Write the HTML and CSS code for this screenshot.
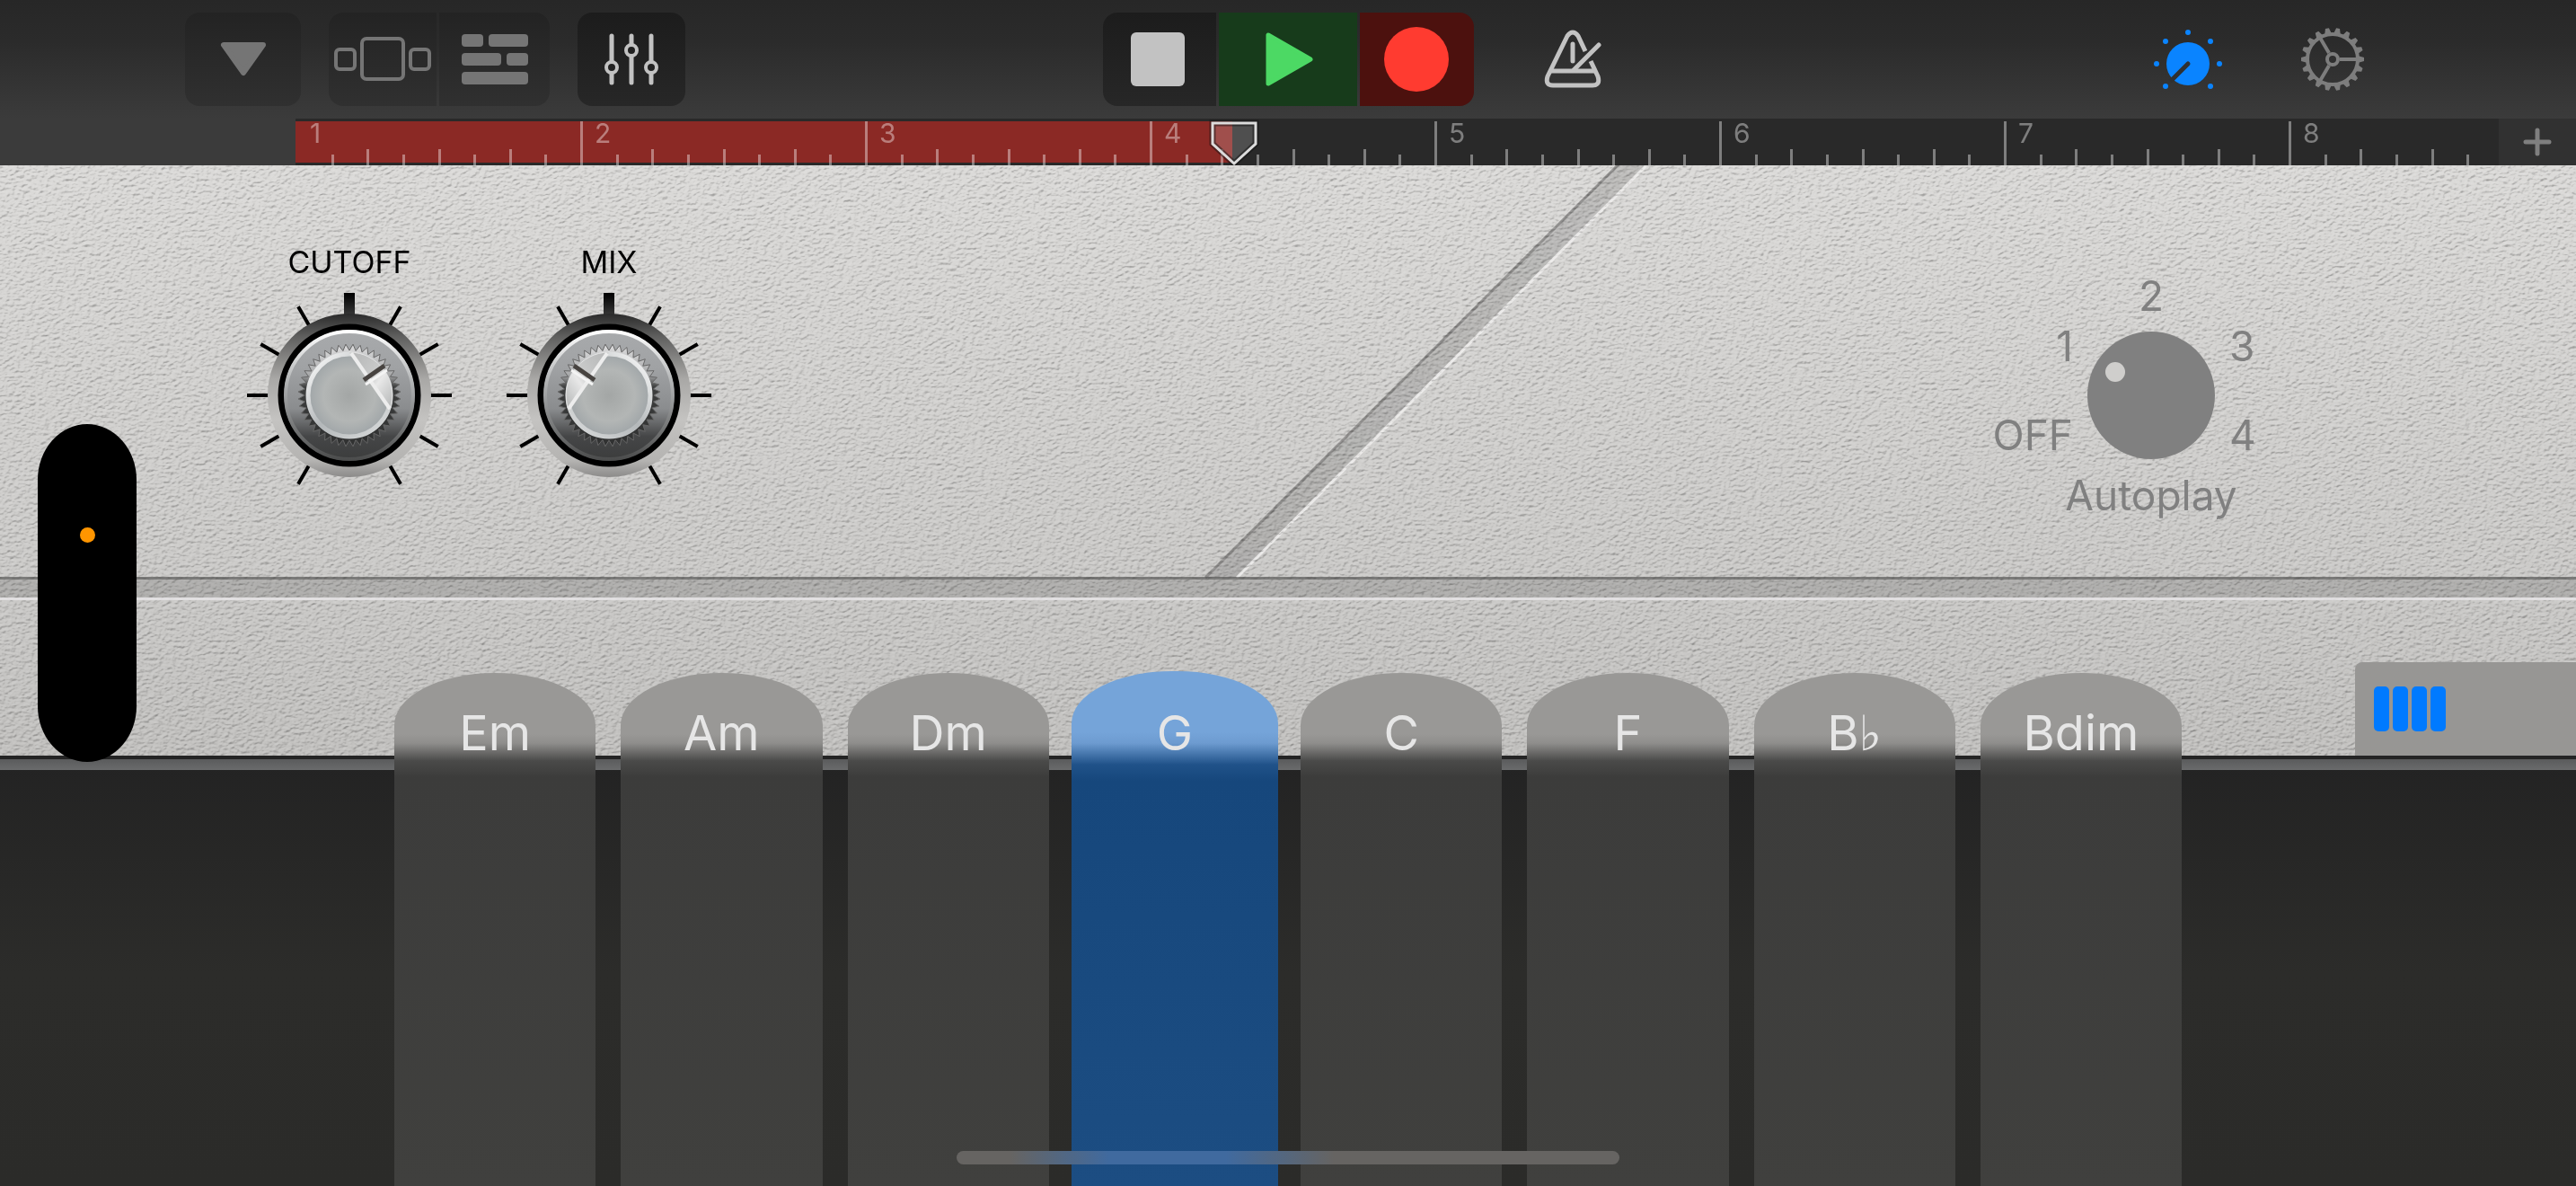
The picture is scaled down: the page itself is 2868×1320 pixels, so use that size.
FILE: index.html
```html
<!DOCTYPE html>
<html lang="en">
<head>
  <meta charset="utf-8">
  <title>Smart Keyboard</title>
  <link rel="stylesheet" href="styles.css">
</head>
<body>
  <header class="toolbar">
    <div class="tools">
      <button class="tool nav" aria-label="Menu">
        <svg width="54" height="40" viewBox="0 0 54 40"><path d="M5 4h44L27 35z" fill="#757575" stroke="#757575" stroke-width="6" stroke-linejoin="round"/></svg>
      </button>
      <div class="pair">
        <button class="tool" aria-label="Browser">
          <svg width="110" height="52" viewBox="0 0 110 52" fill="none" stroke="#757575" stroke-width="4">
            <rect x="3" y="15" width="21" height="22" rx="4"/>
            <rect x="32" y="3" width="46" height="45" rx="5"/>
            <rect x="86" y="15" width="21" height="22" rx="4"/>
          </svg>
        </button>
        <button class="tool" aria-label="Tracks">
          <svg width="74" height="56" viewBox="0 0 74 56" fill="#757575">
            <rect width="24" height="14" rx="4"/><rect x="30" width="44" height="14" rx="4"/>
            <rect y="21" width="44" height="14" rx="4"/><rect x="50" y="21" width="24" height="14" rx="4"/>
            <rect y="42" width="74" height="14" rx="4"/>
          </svg>
        </button>
      </div>
      <button class="tool mixer" aria-label="Track controls">
        <svg width="62" height="58" viewBox="0 0 62 58" fill="none" stroke="#c2c2c2" stroke-width="5" stroke-linecap="round">
          <path d="M9 3v28M9 45v10M31 3v9M31 26v29M53 3v28M53 45v10"/>
          <g stroke-width="4"><circle cx="9" cy="38" r="6"/><circle cx="31" cy="19" r="6"/><circle cx="53" cy="38" r="6"/></g>
        </svg>
      </button>
    </div>

    <div class="transport">
      <button class="stop" aria-label="Stop"><svg width="60" height="60"><rect width="60" height="60" rx="6" fill="#c2c2c2"/></svg></button>
      <button class="play" aria-label="Play"><svg width="54" height="62" viewBox="0 0 54 62"><path d="M3 4v54l47-27z" fill="#4cd964" stroke="#4cd964" stroke-width="5" stroke-linejoin="round"/></svg></button>
      <button class="record" aria-label="Record"><svg width="72" height="72"><circle cx="36" cy="36" r="36" fill="#ff3b30"/></svg></button>
    </div>

    <div class="extras">
      <button class="metronome" aria-label="Metronome">
        <svg width="72" height="72" viewBox="0 0 72 72" fill="none" stroke="#c2c2c2" stroke-width="5" stroke-linecap="round" stroke-linejoin="round">
          <path d="M50 27L42 10Q36 2 30 10L8 55Q5 65 14 65H58Q67 65 64 55L56 38" stroke-linecap="butt"/>
          <path d="M12 49H60" stroke-linecap="butt"/>
          <path d="M37 48L65 20M36 19V38"/>
        </svg>
      </button>
      <button class="controls" aria-label="Instrument controls">
        <svg width="78" height="78" viewBox="-39 -39 78 78" fill="#0a84ff">
          <circle r="24"/>
          <path d="M0 0L-18 18" stroke="#303030" stroke-width="5" stroke-linecap="round"/>
          <circle cy="-35" r="3"/><circle cx="25" cy="-25" r="3"/><circle cx="35" r="3"/><circle cx="25" cy="25" r="3"/>
          <circle cx="-25" cy="-25" r="3"/><circle cx="-35" r="3"/><circle cx="-25" cy="25" r="3"/>
        </svg>
      </button>
      <button class="settings" aria-label="Settings">
        <svg width="72" height="72" viewBox="-36 -36 72 72" fill="none" stroke="#7d7d7d" stroke-width="4">
          <circle r="28"/><circle r="6"/>
          <path d="M8 0H27M-4 -7L-14 -24M-4 7L-14 24"/>
          <g id="cog" fill="#7d7d7d" stroke="none"></g>
        </svg>
      </button>
    </div>
  </header>

  <div class="timeline">
    <div class="ruler" id="ruler"><div class="region"></div></div>
    <svg class="playhead" width="56" height="54" viewBox="0 0 56 54">
      <path d="M4 5H52V28L28 50L4 28Z" fill="#fff" fill-opacity=".18" stroke="#141414" stroke-opacity=".5" stroke-width="7"/>
      <path d="M4 5H52V28L28 50L4 28Z" fill="none" stroke="#dcdcdc" stroke-width="3"/>
    </svg>
    <button class="add" aria-label="Add section">
      <svg width="32" height="32"><path d="M16 3V29M3 16H29" stroke="#7f7f7f" stroke-width="5" stroke-linecap="round"/></svg>
    </button>
  </div>

  <main class="instrument">
    <section class="panel">
      <svg class="surface" width="100%" height="100%" aria-hidden="true">
        <defs>
          <filter id="leather" x="0" y="0" width="100%" height="100%" color-interpolation-filters="sRGB">
            <feTurbulence type="fractalNoise" baseFrequency="0.19 0.3" numOctaves="2" seed="4"/>
            <feColorMatrix values="0 0 0 0 0  0 0 0 0 0  0 0 0 0 0  1 0 0 0 0"/>
            <feDiffuseLighting surfaceScale="1.1" diffuseConstant="0.73" lighting-color="#fff">
              <feDistantLight azimuth="240" elevation="45"/>
            </feDiffuseLighting>
          </filter>
        </defs>
        <svg x="50%" overflow="visible">
          <path d="M-92 459L369 -2H401L-57 459Z" fill="#000" fill-opacity=".14"/>
          <path d="M-92 459L369 -2" stroke="#7c7b79" stroke-opacity=".8" stroke-width="3"/>
          <path d="M-57 459L401 -2" stroke="#eeedec" stroke-opacity=".9" stroke-width="3"/>
        </svg>
        <rect class="grain" width="100%" height="100%" filter="url(#leather)"/>
      </svg>

      <div class="upper">
        <div class="knobs">
          <label class="knob">
            <span>CUTOFF</span>
            <svg width="228" height="228" viewBox="-114 -114 228 228"><use href="#dial"/><use href="#cap"/></svg>
            <input type="range" min="0" max="100" value="66">
          </label>
          <label class="knob">
            <span>MIX</span>
            <svg width="228" height="228" viewBox="-114 -114 228 228"><use href="#dial"/><use href="#cap" transform="scale(-1 1)"/></svg>
            <input type="range" min="0" max="100" value="34">
          </label>
        </div>
        <div class="autoplay">
          <div class="side left"><span>1</span><span>OFF</span></div>
          <span class="two">2</span>
          <div class="selector">
            <svg width="142" height="142"><circle cx="71" cy="71" r="71" fill="#808080"/><circle cx="31" cy="45" r="11" fill="#cfcecc"/></svg>
            <input id="autoplay" type="range" min="0" max="4" value="1">
          </div>
          <div class="side"><span>3</span><span>4</span></div>
          <label for="autoplay">Autoplay</label>
        </div>
      </div>
      <div class="groove"></div>
      <div class="lower">
        <button class="mode" aria-label="Chord strips">
          <svg width="80" height="50" fill="#007aff">
            <rect width="17" height="50" rx="5"/><rect x="21" width="17" height="50" rx="5"/>
            <rect x="42" width="17" height="50" rx="5"/><rect x="63" width="17" height="50" rx="5"/>
          </svg>
        </button>
      </div>
    </section>
    <section class="keybed"></section>

    <div class="strips">
      <button>Em</button>
      <button>Am</button>
      <button>Dm</button>
      <button class="active">G</button>
      <button>C</button>
      <button>F</button>
      <button>B♭</button>
      <button>Bdim</button>
    </div>
    <div class="notch"><i></i></div>
    <div class="home"></div>
  </main>

  <!-- shared knob artwork -->
  <svg class="defs" width="0" height="0">
    <defs>
      <linearGradient id="rim" x2="0" y2="1">
        <stop offset="0" stop-color="#2a2a2a"/><stop offset=".14" stop-color="#5f5f5e"/>
        <stop offset=".4" stop-color="#a9a8a6"/><stop offset=".65" stop-color="#c4c3c1"/>
        <stop offset=".9" stop-color="#b4b3b1"/><stop offset="1" stop-color="#8c8b8a"/>
      </linearGradient>
      <linearGradient id="plate" x2="0" y2="1">
        <stop offset="0" stop-color="#a9abad"/><stop offset=".3" stop-color="#a0a2a4"/>
        <stop offset=".6" stop-color="#8a8c8e"/><stop offset=".8" stop-color="#454647"/><stop offset="1" stop-color="#3a3b3b"/>
      </linearGradient>
      <linearGradient id="edge" x2="0" y2="1">
        <stop offset="0" stop-color="#fff"/><stop offset=".4" stop-color="#b0b2b3"/><stop offset="1" stop-color="#4c4d4d"/>
      </linearGradient>
      <linearGradient id="teethFill" x2="0" y2="1">
        <stop offset="0" stop-color="#dededf"/><stop offset=".3" stop-color="#a8a9aa"/>
        <stop offset=".42" stop-color="#3c3d3d"/><stop offset="1" stop-color="#303131"/>
      </linearGradient>
      <radialGradient id="face">
        <stop offset="0" stop-color="#a3a6a5"/><stop offset=".6" stop-color="#b3b6b5"/><stop offset="1" stop-color="#9da3a6"/>
      </radialGradient>
      <linearGradient id="lip" x2="1" y2="1">
        <stop offset="0" stop-color="#fff"/><stop offset=".5" stop-color="#b4b8ba"/><stop offset="1" stop-color="#dcdede"/>
      </linearGradient>
      <linearGradient id="flat" x2="1" y2="1">
        <stop offset="0" stop-color="#b4b5b5"/><stop offset=".45" stop-color="#c8c9c9"/><stop offset=".6" stop-color="#e8e8e8"/><stop offset="1" stop-color="#b2b4b4"/>
      </linearGradient>
      <linearGradient id="pointer" x2="0" y2="1">
        <stop offset="0" stop-color="#000"/><stop offset="1" stop-color="#3a3a3a"/>
      </linearGradient>
      <g id="dial">
        <path id="marks" stroke="#000" stroke-width="4"/>
        <rect x="-6" y="-114" width="12" height="26" fill="url(#pointer)"/>
        <circle r="91" fill="url(#rim)"/>
        <circle r="76" fill="url(#plate)" stroke="#000" stroke-width="7"/>
        <circle r="71" fill="none" stroke="url(#edge)" stroke-width="4"/>
        <path id="teeth" fill="url(#teethFill)" stroke="#666" stroke-width="1"/>
      </g>
      <g id="cap">
        <circle r="48" fill="url(#face)"/>
        <circle r="46" fill="none" stroke="url(#lip)" stroke-width="5"/>
        <path d="M0 -48A48 48 0 0 1 45 16Z" fill="url(#flat)"/>
        <path d="M2 -47L45 15" stroke="#ededed" stroke-width="4"/>
        <path d="M0 -48A48 48 0 0 1 45 16" fill="none" stroke="#e4e4e4" stroke-width="1"/>
        <path d="M16 -17L39 -33" stroke="#474340" stroke-width="5"/>
        <path d="M18 -12L42 -28" stroke="#f4f4f4" stroke-width="3"/>
      </g>
    </defs>
  </svg>

  <script>
    const ruler = document.getElementById('ruler');
    for (let n = 1; n <= 8; n++) {
      let bar = document.createElement('div');
      bar.className = 'bar';
      bar.innerHTML = '<span>' + n + '</span>' + '<i></i>'.repeat(8);
      ruler.appendChild(bar);
    }

    function polar(r, deg) {
      let a = deg * Math.PI / 180;
      return (r * Math.cos(a)).toFixed(2) + ' ' + (r * Math.sin(a)).toFixed(2);
    }

    // scale marks every 30 degrees, none at the bottom
    let marks = '';
    for (let d = 0; d < 360; d += 30) {
      if (d !== 90 && d !== 270) marks += 'M' + polar(90, d) + 'L' + polar(114, d);
    }
    document.getElementById('marks').setAttribute('d', marks);

    let teeth = '';
    for (let i = 0; i < 44; i++) {
      let d = i * 360 / 44;
      teeth += (i ? 'L' : 'M') + polar(50, d) + 'L' + polar(57, d + 180 / 44);
    }
    document.getElementById('teeth').setAttribute('d', teeth + 'Z');

    let cog = '';
    for (let i = 0; i < 18; i++) {
      cog += '<path d="M28 -4L35 -2V2L28 4Z" transform="rotate(' + i * 20 + ')"/>';
    }
    document.getElementById('cog').innerHTML = cog;
  </script>
</body>
</html>
```
FILE: styles.css
```css
* {
  box-sizing: border-box;
}
body {
  margin: 0;
  min-height: 100vh;
  display: flex;
  flex-direction: column;
  background: #262626;
  font-family: Inter, "Liberation Sans", "DejaVu Sans", sans-serif;
  overflow: hidden;
}
button {
  border: 0;
  padding: 0;
  background: none;
  color: inherit;
  font: inherit;
  display: flex;
  align-items: center;
  justify-content: center;
}
svg {
  display: block;
}
.defs {
  position: absolute;
}

/* toolbar */
.toolbar {
  height: 132px;
  padding: 14px 0;
  display: grid;
  grid-template-columns: 1fr auto 1fr;
  background: linear-gradient(#272727, #2b2b2b 35%, #3b3b3b);
}
.tools {
  display: flex;
  gap: 31px;
  padding-left: 206px;
}
.tool {
  height: 104px;
  background: linear-gradient(#232323, #303030);
}
.nav {
  width: 129px;
  border-radius: 16px;
}
.pair {
  display: flex;
  gap: 3px;
}
.pair .tool {
  width: 120px;
  border-radius: 16px 0 0 16px;
}
.pair .tool + .tool {
  width: 123px;
  border-radius: 0 16px 16px 0;
}
.mixer {
  width: 120px;
  border-radius: 16px;
  background: linear-gradient(#1c1c1c, #272727);
}
.transport {
  display: flex;
  gap: 3px;
}
.transport button {
  height: 104px;
}
.stop {
  width: 126px;
  padding-right: 4px;
  border-radius: 16px 0 0 16px;
  background: linear-gradient(#1c1c1c, #272727);
}
.play {
  width: 154px;
  padding-left: 4px;
  background: #173b1b;
}
.record {
  width: 127px;
  border-radius: 0 16px 16px 0;
  background: #4c110e;
}
.extras {
  display: flex;
  align-items: center;
  padding-right: 235px;
}
.metronome {
  margin-left: 74px;
  margin-right: auto;
}
.controls {
  margin-right: 86px;
  padding-top: 10px;
}

/* timeline */
.timeline {
  position: relative;
  height: 52px;
  padding-left: 329px;
  display: flex;
  background: #3b3b3b;
}
.ruler {
  position: relative;
  flex: 1;
  min-width: 0;
  padding-top: 3px;
  display: flex;
  overflow-x: clip;
  background: #292929;
}
.region {
  position: absolute;
  left: 0;
  top: 3px;
  bottom: 3px;
  width: 1043px;
  background: #8b2925;
}
.bar {
  position: relative;
  flex: 0 0 317px;
  display: flex;
  align-items: flex-end;
}
.bar span {
  position: absolute;
  left: 16px;
  top: -5px;
  font-size: 30px;
  line-height: 36px;
  color: rgba(255, 255, 255, 0.4);
}
.bar i {
  flex: 1;
  height: 12px;
  border-left: 3px solid rgba(255, 255, 255, 0.4);
}
.bar i:nth-of-type(odd) {
  height: 18px;
}
.bar i:first-of-type {
  height: 49px;
}
.bar:nth-of-type(2) i:first-of-type {
  border-color: transparent;
}
.playhead {
  position: absolute;
  left: 1346px;
  top: 0;
}
.add {
  width: 86px;
  background: #313131;
}

/* instrument */
.instrument {
  position: relative;
  flex: 1;
  display: flex;
  flex-direction: column;
}
.panel {
  position: relative;
  background: linear-gradient(#dad9d7, #cccbc9 60%, #c0bfbd);
}
.surface {
  position: absolute;
  inset: 0;
}
.grain {
  mix-blend-mode: hard-light;
  opacity: 0.5;
}
.upper {
  position: relative;
  display: flex;
  justify-content: space-between;
  padding: 88px 302px 67px 275px;
}
.knobs {
  display: flex;
  gap: 61px;
}
.knob {
  position: relative;
  display: flex;
  flex-direction: column;
  align-items: center;
  gap: 14px;
  font-size: 34px;
  line-height: 40px;
  color: #000;
}
.knob input,
.selector input {
  position: absolute;
  inset: 0;
  width: 100%;
  height: 100%;
  margin: 0;
  opacity: 0;
}
.autoplay {
  display: grid;
  grid-template-columns: 84px 142px 84px;
  grid-template-rows: 48px 142px 48px;
  gap: 16px;
  padding-top: 33px;
  justify-items: center;
  font-size: 46px;
  line-height: 48px;
  color: #808080;
}
.side {
  grid-column: 3;
  grid-row: 1 / 4;
  justify-self: start;
  display: flex;
  flex-direction: column;
  gap: 51px;
  padding-top: 56px;
}
.side.left {
  grid-column: 1;
  justify-self: end;
  text-align: right;
}
.two,
.selector,
.autoplay label {
  grid-column: 2;
}
.autoplay label {
  white-space: nowrap;
}
.two {
  grid-row: 1;
}
.selector {
  position: relative;
}
.groove {
  position: relative;
  height: 26px;
  border-top: 3px solid rgba(70, 70, 68, 0.5);
  border-bottom: 3px solid rgba(235, 233, 235, 0.85);
  background: rgba(0, 0, 0, 0.13);
}
.lower {
  position: relative;
  height: 173px;
  display: flex;
  justify-content: flex-end;
  align-items: flex-end;
}
.mode {
  width: 246px;
  height: 104px;
  padding-left: 21px;
  justify-content: flex-start;
  border-radius: 8px 0 0 0;
  background: #979694;
}
.keybed {
  flex: 1;
  border-top: 4px solid #242424;
  background: linear-gradient(#5a5b5c, #6a6b6c) top / 100% 12px no-repeat, linear-gradient(#232323, #2c2c2a 50%, #2b2b29);
}

/* chord strips */
.strips {
  position: absolute;
  top: 565px;
  bottom: 0;
  left: 439px;
  right: 439px;
  display: grid;
  grid-template-columns: repeat(8, 1fr);
  gap: 28px;
}
.strips button {
  align-items: flex-start;
  padding-top: 32px;
  border-radius: 112px 112px 0 0 / 58px 58px 0 0;
  background: linear-gradient(#999896 68px, #8f8e8c 78px, #4a4a49 98px, #3c3c3b 116px, #40403e);
  font-size: 54px;
  line-height: 70px;
  color: #e6e6e6;
}
.strips .active {
  margin: -2px -3px 0;
  padding-top: 34px;
  background: linear-gradient(#75a4d9 68px, #6d9bd0 80px, #205289 104px, #16477c 122px, #1c4d82);
}
.notch {
  position: absolute;
  left: 42px;
  top: 288px;
  width: 110px;
  height: 376px;
  padding-top: 115px;
  border-radius: 55px / 62px;
  background: #000;
}
.notch i {
  display: block;
  width: 17px;
  height: 17px;
  margin: 0 auto;
  border-radius: 50%;
  background: #ff9500;
}
.home {
  position: absolute;
  left: 50%;
  bottom: 24px;
  width: 738px;
  height: 15px;
  margin-left: -369px;
  border-radius: 8px;
  background: linear-gradient(90deg, #666462 60px, #406a9f 170px, #406a9f 300px, #666462 420px);
}
```
